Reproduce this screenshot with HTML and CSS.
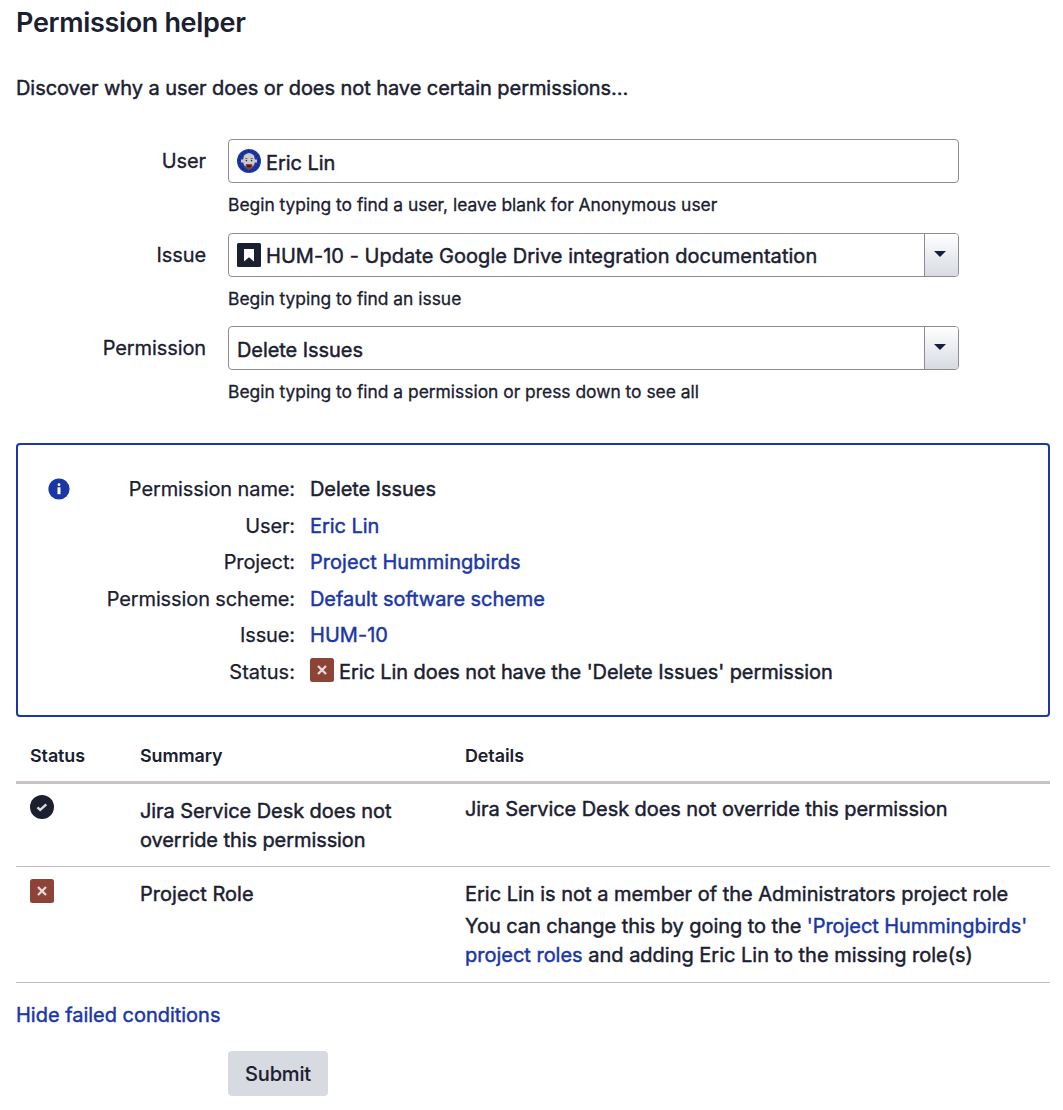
FILE: index.html
```html
<!DOCTYPE html>
<html lang="en">
<head>
<meta charset="utf-8">
<title>Permission helper</title>
<link rel="stylesheet" href="styles.css">
</head>
<body>
<svg class="sprite" width="0" height="0" aria-hidden="true">
  <symbol id="cross" viewBox="0 0 24 24"><rect width="24" height="24" rx="2.5" fill="#8d4437"/><path d="M8 8l8 8M16 8l-8 8" stroke="#e5dcdc" stroke-width="2.3"/></symbol>
</svg>
<main>
  <h1>Permission helper</h1>
  <p class="intro">Discover why a user does or does not have certain permissions...</p>
  <form class="fields">
    <div class="field">
      <label>User</label>
      <div class="control">
        <div class="box">
          <svg class="icon" viewBox="0 0 24 24"><circle cx="12" cy="12" r="12" fill="#1a37a5"/><circle cx="12" cy="12" r="9.7" fill="none" stroke="#14205c" stroke-width="1.2" stroke-dasharray="1.3 2.1"/><path d="M7 6.5Q12 1.5 17 6.5L17.8 10.5H20V13.5H17.8Q17 18 12 20Q7 18 6.2 13.5H4V10.5H6.2Z" fill="#cdc8ca"/><path d="M8 9.5h2.5M13.5 9.5H16" stroke="#8d6c6c"/><circle cx="9.4" cy="11.6" r=".8" fill="#26263a"/><circle cx="14.6" cy="11.6" r=".8" fill="#26263a"/><path d="M9 15h6l1 3.5L12 21l-4-2.500z" fill="#8d4437"/><path d="M10 16.300h4v2h-4z" fill="#302030"/></svg>
          <span>Eric Lin</span>
        </div>
        <p class="help">Begin typing to find a user, leave blank for Anonymous user</p>
      </div>
    </div>
    <div class="field">
      <label>Issue</label>
      <div class="control">
        <div class="box select">
          <svg class="icon" viewBox="0 0 24 24"><rect width="24" height="24" rx="1.500" fill="#1a2030"/><path d="M7 6h10v12.500l-5-4.300-5 4.300z" fill="#fff"/></svg>
          <span class="wide">HUM-10 - Update Google Drive integration documentation</span>
          <span class="arrow"><svg width="12" height="6" viewBox="0 0 12 6"><path d="M0 0h12L6 6z" fill="#171f3c"/></svg></span>
        </div>
        <p class="help">Begin typing to find an issue</p>
      </div>
    </div>
    <div class="field">
      <label>Permission</label>
      <div class="control">
        <div class="box select">
          <span>Delete Issues</span>
          <span class="arrow"><svg width="12" height="6" viewBox="0 0 12 6"><path d="M0 0h12L6 6z" fill="#171f3c"/></svg></span>
        </div>
        <p class="help">Begin typing to find a permission or press down to see all</p>
      </div>
    </div>
  </form>
  <section class="panel">
    <svg class="info" viewBox="0 0 22 22"><circle cx="11" cy="11" r="10.600" fill="#1a37a5"/><circle cx="11" cy="6.700" r="1.400" fill="#fff"/><path d="M9.500 9.300H12.500V16.200H9.500z" fill="#fff"/></svg>
    <dl>
      <dt>Permission name:</dt><dd>Delete Issues</dd>
      <dt>User:</dt><dd><a>Eric Lin</a></dd>
      <dt>Project:</dt><dd><a class="wide">Project Hummingbirds</a></dd>
      <dt>Permission scheme:</dt><dd><a>Default software scheme</a></dd>
      <dt>Issue:</dt><dd><a class="wide">HUM-10</a></dd>
      <dt class="status-key">Status:</dt><dd class="status-value"><svg class="icon"><use href="#cross"/></svg><span>Eric Lin does not have the 'Delete Issues' permission</span></dd>
    </dl>
  </section>
  <div class="table">
    <div class="row head"><span>Status</span><span>Summary</span><span>Details</span></div>
    <div class="row first">
      <div><svg class="icon" viewBox="0 0 24 24"><circle cx="12" cy="12" r="12" fill="#1a2030"/><path d="M7.500 12.300l2.700 2.500 6.100-5.400" fill="none" stroke="#dedbe0" stroke-width="2.400"/></svg></div>
      <div class="summary">Jira Service Desk does not<br>override this permission</div>
      <div class="details">Jira Service Desk does not override this permission</div>
    </div>
    <div class="row second">
      <div><svg class="icon"><use href="#cross"/></svg></div>
      <div class="summary"><span class="wide">Project Role</span></div>
      <div class="details"><p class="reason">Eric Lin is not a member of the Administrators project role</p><p class="advice">You can change this by going to the <a>'Project Hummingbirds'</a><br><span class="reason"><a>project roles</a> and adding Eric Lin to the missing role(s)</span></p></div>
    </div>
  </div>
  <a class="toggle">Hide failed conditions</a>
  <button class="submit" type="button">Submit</button>
</main>
</body>
</html>
```
FILE: styles.css
```css
* { box-sizing: border-box; }
body { margin: 0; background: #fff; color: #1a2030; font: 20px/30px Inter, "Liberation Sans", sans-serif; letter-spacing: -.065px; white-space: nowrap; -webkit-text-stroke: .45px currentColor; }
main { padding: 6px 13px 0 16px; height: 1110px; overflow: hidden; }
h1, p, dl, dd { margin: 0; }
h1 { font-size: 27px; line-height: 33px; font-weight: 600; letter-spacing: -.33px; -webkit-text-stroke: 0; }
a { color: #1a37a5; }
.wide { letter-spacing: .04px; }
.sprite { display: block; width: 0; height: 0; }
.icon { display: block; flex: none; width: 24px; height: 24px; }
.intro { margin-top: 34px; }
.fields { margin-top: 36px; }
.field { display: flex; height: 93.5px; }
.field label { width: 190px; padding-top: 7px; text-align: right; letter-spacing: -.1px; -webkit-text-stroke-width: .3px; }
.control { width: 731px; margin-left: 22px; }
.box { display: flex; align-items: center; gap: 5px; height: 44px; padding: 0 0 0 8px; border: 1.5px solid #908a92; border-radius: 4px; overflow: hidden; }
.box > span:not(.arrow) { padding-top: 3px; }
.arrow { display: flex; align-items: center; justify-content: center; width: 34px; height: 100%; margin-left: auto; padding: 0 4px 2px 0; border-left: 1px solid #908a92; background: linear-gradient(#fff, #d7dbe1); }
.help { margin-top: 10px; font-size: 17.4px; line-height: 24px; letter-spacing: 0; -webkit-text-stroke-width: .3px; }
.panel { display: flex; height: 274px; margin-top: 23.5px; padding: 26px 30px; border: 2px solid #1a37a5; border-radius: 4px; }
.info { width: 22px; height: 22px; margin-top: 7px; }
dl { display: grid; grid-template-columns: 197px auto; grid-auto-rows: 36.5px; column-gap: 15px; margin-left: 28px; line-height: 36px; }
dt { text-align: right; letter-spacing: -.11px; -webkit-text-stroke-width: .25px; }
.status-key { letter-spacing: .05px; }
.status-value { display: flex; align-items: center; gap: 5px; letter-spacing: -.085px; }
.status-value .icon { margin-top: -3px; }
.row { display: grid; grid-template-columns: 110px 325px auto; padding-left: 14px; border-bottom: 1.5px solid #c0bec1; }
.row .icon { margin-left: .4px; }
.head { height: 67px; padding-top: 24px; border-bottom: 3px solid #c8c2c4; font-size: 17.9px; font-weight: 600; -webkit-text-stroke: 0; }
.first { height: 83px; padding-top: 11px; line-height: 29.4px; letter-spacing: -.08px; }
.first .summary { padding-top: 2px; }
.second { height: 116px; padding-top: 12px; line-height: 29.4px; }
.second .summary, .second .details { padding-top: 1px; }
.reason { letter-spacing: -.01px; }
.advice { margin-top: 2.5px; }
.toggle { display: block; margin-top: 17px; letter-spacing: -.02px; }
.submit { display: block; width: 100px; height: 45px; margin: 21px 0 0 212px; padding: 0; border: 0; border-radius: 4px; background: #d7dbe1; color: #1a2030; font: 500 20px/44px Inter, "Liberation Sans", sans-serif; letter-spacing: -.15px; -webkit-text-stroke-width: .1px; }
```
